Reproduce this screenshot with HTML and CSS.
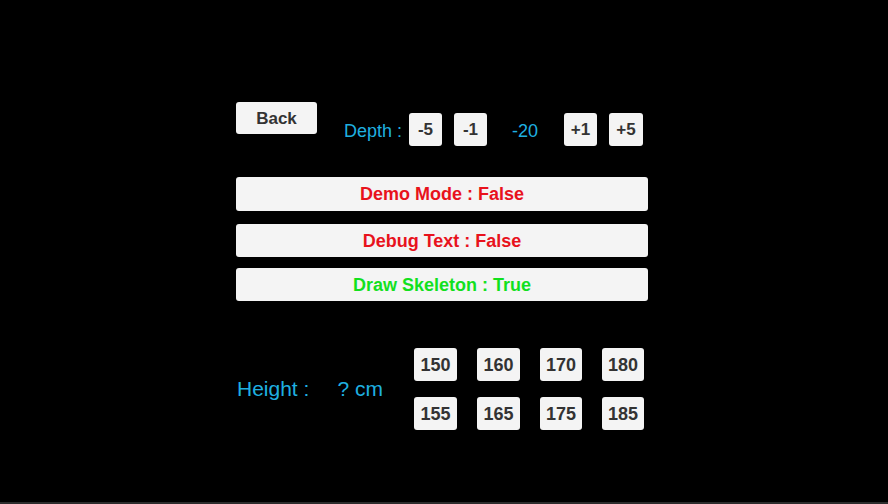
FILE: index.html
```html
<!DOCTYPE html>
<html>
<head>
<meta charset="utf-8">
<link rel="stylesheet" href="styles.css">
</head>
<body>
<div class="screen">
  <div class="panel">
    <div class="top-row">
      <div class="btn back">Back</div>
      <div class="depth">
        <span class="label depth-label">Depth :</span>
        <div class="btn sq">-5</div>
        <div class="btn sq">-1</div>
        <span class="label depth-val">-20</span>
        <div class="btn sq">+1</div>
        <div class="btn sq last">+5</div>
      </div>
    </div>
    <div class="btn wide red first">Demo Mode : False</div>
    <div class="btn wide red second">Debug Text : False</div>
    <div class="btn wide green third">Draw Skeleton : True</div>
    <div class="height-row">
      <div class="height-label"><span>Height :</span><span class="cm">? cm</span></div>
      <div class="grid">
        <div class="btn num">150</div>
        <div class="btn num">160</div>
        <div class="btn num">170</div>
        <div class="btn num">180</div>
        <div class="btn num">155</div>
        <div class="btn num">165</div>
        <div class="btn num">175</div>
        <div class="btn num">185</div>
      </div>
    </div>
  </div>
  <div class="bottom-bar"></div>
</div>
</body>
</html>
```
FILE: styles.css
```css
* { box-sizing: border-box; }
html, body { margin: 0; padding: 0; background: #000; }
body { font-family: "Liberation Sans", Arial, sans-serif; }
.screen {
  width: 888px;
  height: 504px;
  display: flex;
  flex-direction: column;
  background: #000;
}
.panel {
  margin-left: 236px;
  margin-top: 102px;
  width: 412px;
  display: flex;
  flex-direction: column;
  flex: 1;
}
.btn {
  background: #f4f4f4;
  border-radius: 3px;
  color: #333;
  font-weight: bold;
  display: flex;
  align-items: center;
  justify-content: center;
  flex-shrink: 0;
  padding-top: 1px;
}
.top-row { display: flex; align-items: flex-start; height: 44px; }
.back { width: 81px; height: 32px; font-size: 17px; }
.depth { display: flex; align-items: center; margin-top: 11px; margin-left: 27px; flex-shrink: 0; }
.label { color: #1fb0e0; font-size: 18px; flex-shrink: 0; padding-top: 3px; }
.depth-label { width: 65px; }
.sq { width: 33px; height: 33px; font-size: 17px; margin-right: 12px; }
.sq.last { margin-right: 0; width: 34px; }
.depth-val { margin-left: 13px; width: 52px; }
.wide { height: 33px; font-size: 18px; }
.first { margin-top: 31px; height: 34px; }
.second { margin-top: 13px; }
.third { margin-top: 11px; }
.red { color: #e8121c; }
.green { color: #12e01e; }
.height-row { display: flex; margin-top: 47px; }
.height-label {
  width: 178px;
  color: #1fb0e0;
  font-size: 21px;
  display: flex;
  align-items: center;
  padding-left: 1px;
}
.cm { margin-left: 28px; }
.grid {
  display: grid;
  grid-template-columns: 43px 43px 42px 42px;
  grid-auto-rows: 33px;
  column-gap: 20px;
  row-gap: 16px;
}
.num { font-size: 18px; }
.bottom-bar { height: 2px; background: #2c2c2c; }
```
